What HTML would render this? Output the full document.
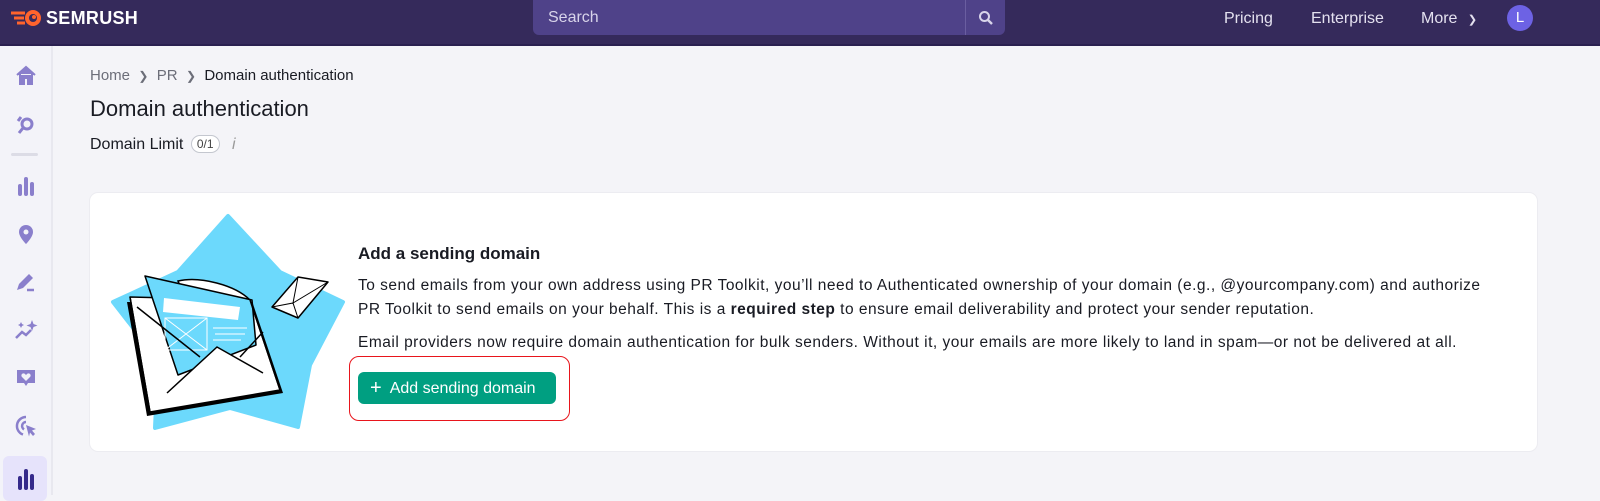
<!DOCTYPE html>
<html><head><style>
*{margin:0;padding:0;box-sizing:border-box}
body{width:1600px;height:495px;overflow:hidden;background:#f4f4f8;font-family:"Liberation Sans",sans-serif;color:#191b23;position:relative}
.hdr{position:absolute;left:0;top:0;width:1600px;height:46px;background:#352a5b;border-bottom:2px solid #2a2050}
.logo{position:absolute;left:12px;top:8px;color:#fff;font-weight:bold;font-size:18px;letter-spacing:0.3px}
.search{position:absolute;left:533px;top:0;width:472px;height:35px;background:#4f4289;border-radius:0 0 6px 6px}
.search span{position:absolute;left:15px;top:9px;color:#d8d4ea;font-size:16px}
.search .sb{position:absolute;left:432px;top:0;width:40px;height:35px;border-left:1px solid #6a5ea0}
.nav{position:absolute;top:10px;color:#e4e1ef;font-size:16px}
.av{position:absolute;left:1507px;top:5px;width:26px;height:26px;border-radius:50%;background:#6d62e4;color:#fff;font-size:15px;text-align:center;line-height:26px}
.side{position:absolute;left:0;top:46px;width:53px;height:449px;background:#f3f3f9;border-right:2px solid #e8e8ef}
.side svg{position:absolute;left:14px}
.crumb{position:absolute;left:90px;top:67px;font-size:15px;color:#6c6e79}
.crumb b{font-weight:normal;color:#191b23}
h1{position:absolute;left:90px;top:96px;font-size:22px;font-weight:normal}
.lim{position:absolute;left:90px;top:135px;font-size:16px}
.pill{display:inline-block;border:1px solid #c4c7cf;border-radius:10px;font-size:12px;padding:1px 5px;margin-left:3px;vertical-align:1px;color:#444;background:#fff}
.card{position:absolute;left:90px;top:193px;width:1447px;height:258px;background:#fff;border-radius:8px;box-shadow:0 0 0 1px #ececf1}
.ttl{position:absolute;left:358px;top:244px;font-size:17px;font-weight:bold}
.p{position:absolute;left:358px;font-size:15.5px;line-height:24px;color:#191b23;width:1138px;letter-spacing:0.5px}
.btn{position:absolute;left:358px;top:372px;width:198px;height:32px;background:#009f81;border-radius:6px;color:#fff;font-size:16px;line-height:32px;padding-left:12px}
.red{position:absolute;left:349px;top:356px;width:221px;height:65px;border:1.5px solid #e8151c;border-radius:10px}
</style></head><body>
<div class="hdr">
<svg style="position:absolute;left:11px;top:9px" width="32" height="18" viewBox="0 0 32 18"><path d="M0 4h14M3 9h10M6 14h8" stroke="#ff642d" stroke-width="3"/><circle cx="22" cy="9" r="8" fill="#ff642d"/><circle cx="22" cy="9" r="4" fill="#352a5b"/><circle cx="23" cy="8" r="2" fill="#ff642d"/></svg>
<div class="logo" style="left:46px">SEMRUSH</div>
<div class="search"><span>Search</span><div class="sb"><svg style="position:absolute;left:12px;top:10px" width="16" height="16" viewBox="0 0 16 16"><circle cx="6.5" cy="6.5" r="4.5" fill="none" stroke="#d8d4ea" stroke-width="2"/><path d="M10 10l4 4" stroke="#d8d4ea" stroke-width="2.4"/></svg></div></div>
<div class="nav" style="left:1224px">Pricing</div>
<div class="nav" style="left:1311px">Enterprise</div>
<div class="nav" style="left:1421px">More <span style="font-size:11px;margin-left:6px">&#10095;</span></div>
<div class="av">L</div>
</div>
<div class="side">
<svg style="top:18px" width="24" height="24" viewBox="0 0 24 24"><path d="M3 11L12 3l9 8M6 10v10h4v-6h4v6h4V10" fill="#8a7fcc" stroke="#8a7fcc" stroke-width="2"/></svg>
<svg style="top:67px" width="24" height="24" viewBox="0 0 24 24"><circle cx="13" cy="11" r="5" fill="none" stroke="#8a7fcc" stroke-width="3"/><path d="M9 15l-4 5M4 8l3-4" stroke="#8a7fcc" stroke-width="3"/></svg>
<div style="position:absolute;left:11px;top:107px;width:27px;height:3px;background:#dcdce6;border-radius:2px"></div>
<svg style="top:128px" width="24" height="24" viewBox="0 0 24 24"><path d="M6 12v8M12 5v15M18 10v10" stroke="#8a7fcc" stroke-width="4" stroke-linecap="round"/></svg>
<svg style="top:176px" width="24" height="24" viewBox="0 0 24 24"><path d="M12 22s-7-7-7-12a7 7 0 0114 0c0 5-7 12-7 12z" fill="#8a7fcc"/><circle cx="12" cy="10" r="2.5" fill="#f3f3f9"/></svg>
<svg style="top:224px" width="24" height="24" viewBox="0 0 24 24"><path d="M3 20l2-6 10-10 4 4-10 10z" fill="#8a7fcc"/><path d="M13 20h7" stroke="#8a7fcc" stroke-width="2.5"/></svg>
<svg style="top:272px" width="24" height="24" viewBox="0 0 24 24"><path d="M2 20l6-6 4 3 5-5" stroke="#8a7fcc" stroke-width="2.5" fill="none"/><path d="M18 2l1.5 4 4 1.5-4 1.5-1.5 4-1.5-4-4-1.5 4-1.5zM7 4l1 2 2 1-2 1-1 2-1-2-2-1 2-1z" fill="#8a7fcc"/></svg>
<svg style="top:320px" width="24" height="24" viewBox="0 0 24 24"><path d="M3 4h18v13h-7l-2 3-2-3H3z" fill="#8a7fcc"/><path d="M12 15l-4-4a2 2 0 013-3l1 1 1-1a2 2 0 013 3z" fill="#f3f3f9"/></svg>
<svg style="top:368px" width="24" height="24" viewBox="0 0 24 24"><path d="M12 3a9 9 0 00-3 17.5M12 8a4 4 0 00-2 7.4" stroke="#8a7fcc" stroke-width="2.5" fill="none"/><path d="M12 11l10 4-4 1.5 3 3.5-2 2-3-3.5-1 4z" fill="#8a7fcc"/></svg>
<div style="position:absolute;left:3px;top:410px;width:44px;height:45px;background:#e6e3fb;border-radius:6px"></div>
<svg style="top:420px" width="24" height="24" viewBox="0 0 24 24"><path d="M6 12v10M12 5v17M18 10v12" stroke="#352a8b" stroke-width="4" stroke-linecap="round"/></svg>
</div>
<div class="crumb">Home &nbsp;<span style="font-size:12px">&#10095;</span>&nbsp; PR &nbsp;<span style="font-size:12px">&#10095;</span>&nbsp; <b>Domain authentication</b></div>
<h1>Domain authentication</h1>
<div class="lim">Domain Limit <span class="pill">0/1</span> <span style="color:#999;font-style:italic;margin-left:8px">i</span></div>
<div class="card"></div>
<svg style="position:absolute;left:0;top:0" width="400" height="495" viewBox="0 0 400 495">
<path d="M228 216L280 272 343 302 310 365 298 427 230 408 155 428 158 360 113 302 178 272z" fill="#6cd9fc" stroke="#6cd9fc" stroke-width="4" stroke-linejoin="round"/>
<path d="M127 302L147 416 283 393 253 304z" fill="#000"/>
<path d="M130 297L150 412 280 390 250 300z" fill="#fff" stroke="#000" stroke-width="1.5" stroke-linejoin="round"/>
<path d="M178 281C200 276 235 285 250 300L200 330z" fill="#fff" stroke="#000" stroke-width="1.5"/>
<path d="M145 276L252 300 256 345 178 375z" fill="#6cd9fc" stroke="#000" stroke-width="1.5" stroke-linejoin="round"/>
<path d="M164 298L240 307 238 320 163 312z" fill="#fff"/>
<rect x="165" y="318" width="42" height="32" fill="none" stroke="#fff" stroke-width="1"/>
<path d="M165 318L207 350M207 318L165 350M213 328h34M215 334h30M213 340h28" stroke="#fff" stroke-width="1"/>
<path d="M137 307L200 357M263 332L240 357" stroke="#000" stroke-width="1.5" fill="none"/>
<path d="M167 393L217 347 263 373 280 390 150 412z" fill="#fff"/>
<path d="M167 393L217 347 263 373" stroke="#000" stroke-width="1.5" fill="none"/>
<path d="M130 297L150 412 280 390 250 300" fill="none" stroke="#000" stroke-width="1.5" stroke-linejoin="round"/>
<path d="M272 307L298 277 328 282 298 318z" fill="#fff" stroke="#000" stroke-width="1.5" stroke-linejoin="round"/>
<path d="M298 277L293 303 328 282M272 307l21-4 5 15" fill="none" stroke="#000" stroke-width="1"/>
</svg>
<div class="ttl">Add a sending domain</div>
<div class="p" style="top:274px">To send emails from your own address using PR Toolkit, you’ll need to Authenticated ownership of your domain (e.g., @yourcompany.com) and authorize PR Toolkit to send emails on your behalf. This is a <b>required step</b> to ensure email deliverability and protect your sender reputation.</div>
<div class="p" style="top:331px">Email providers now require domain authentication for bulk senders. Without it, your emails are more likely to land in spam—or not be delivered at all.</div>
<div class="red"></div>
<div class="btn"><span style="font-size:20px;vertical-align:-1px">+</span>&nbsp; Add sending domain</div>
</body></html>
